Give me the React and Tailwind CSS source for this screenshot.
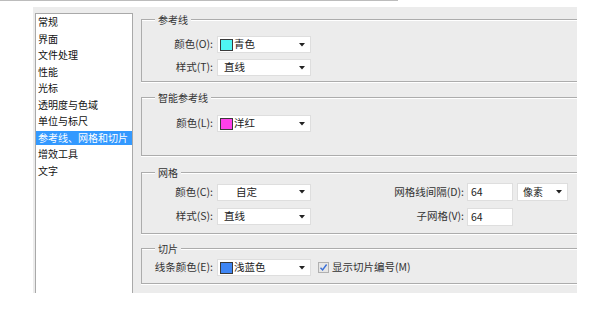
import React from "react";

const font = { fontFamily: '"Noto Sans CJK SC", "Noto Sans", sans-serif' };

function Arrow() {
  return (
    <svg width="6" height="4" viewBox="0 0 6 4" className="absolute right-[5px] top-1/2 -translate-y-1/2">
      <path d="M0 0 H6 L3 3.5 Z" fill="#222" />
    </svg>
  );
}

function Select({ swatch, text, w = "w-[94px]", indent = false }) {
  return (
    <div className={`relative ${w} h-[17px] bg-white border border-[#dedede] flex items-center pl-[2px]`}>
      {swatch && <div className="w-[13px] h-[12px] border border-[#3a3a3a]" style={{ background: swatch }} />}
      <span className={`${swatch ? "ml-[1px]" : indent ? "ml-[16px]" : "ml-[4px]"} text-[10.5px] leading-none text-[#222]`}>{text}</span>
      <Arrow />
    </div>
  );
}

function Label({ children, w = "w-[71px]" }) {
  return <div className={`${w} text-right text-[10.5px] leading-none text-[#333] mr-[4px] shrink-0`}>{children}</div>;
}

function Group({ title, className, children }) {
  return (
    <div className={`relative border border-r-0 border-[#acacac] shadow-[inset_0_1px_0_#fff,0_1px_0_#fff] ${className}`}>
      <div className="absolute left-[13px] top-[-7px] bg-[#ececec] px-[3px] text-[10px] leading-[13px] text-[#333]">{title}</div>
      {children}
    </div>
  );
}

export default function App() {
  const items = ["常规", "界面", "文件处理", "性能", "光标", "透明度与色域", "单位与标尺", "参考线、网格和切片", "增效工具", "文字"];
  return (
    <div className="w-[592px] h-[312px] bg-white overflow-hidden" style={font}>
      <div className="h-px w-[398px] bg-[#bcbcbc]" />
      <div className="ml-[33px] mt-[6px] w-[544px] h-[286px] bg-[#ececec] flex overflow-hidden">
        <div className="ml-[2px] mt-[6px] w-[98px] h-[281px] bg-white border border-b-0 border-[#a9a9a9] pt-[1px] shrink-0">
          {items.map((t, i) => (
            <div
              key={t}
              className={`h-[14px] mb-[2.5px] pl-[2px] text-[10px] leading-[14px] ${i === 7 ? "bg-[#3399ff] text-white" : "text-[#111]"}`}
            >
              {t}
            </div>
          ))}
        </div>
        <div className="ml-[8px] flex-1 flex flex-col">
          <Group title="参考线" className="mt-[12px] pt-[16px] pb-[5px]">
            <div className="flex items-center h-[17px]">
              <Label>颜色(O):</Label>
              <Select swatch="#4ff6f3" text="青色" />
            </div>
            <div className="flex items-center h-[17px] mt-[6px]">
              <Label>样式(T):</Label>
              <Select text="直线" />
            </div>
          </Group>
          <Group title="智能参考线" className="mt-[15px] pt-[17px] pb-[23px]">
            <div className="flex items-center h-[17px]">
              <Label>颜色(L):</Label>
              <Select swatch="#ff40ea" text="洋红" />
            </div>
          </Group>
          <Group title="网格" className="mt-[16px] pt-[10px] pb-[8px]">
            <div className="flex items-center h-[18px]">
              <Label>颜色(C):</Label>
              <Select text="自定" indent />
              <div className="w-[153px] text-right text-[10.5px] leading-none text-[#333] shrink-0">网格线间隔(D):</div>
              <div className="ml-[3px] w-[46px] h-[18px] bg-white border border-[#dedede] text-[10.5px] leading-[16px] pl-[3px] text-[#222]">64</div>
              <div className="ml-[4px]">
                <div className="relative w-[51px] h-[18px] bg-white border border-[#dedede] flex items-center pl-[5px]">
                  <span className="text-[10px] leading-none text-[#222]">像素</span>
                  <Arrow />
                </div>
              </div>
            </div>
            <div className="flex items-center h-[17px] mt-[7px]">
              <Label>样式(S):</Label>
              <Select text="直线" />
              <div className="w-[153px] text-right text-[10.5px] leading-none text-[#333] shrink-0">子网格(V):</div>
              <div className="ml-[3px] w-[46px] h-[18px] bg-white border border-[#dedede] text-[10.5px] leading-[16px] pl-[3px] text-[#222]">64</div>
            </div>
          </Group>
          <Group title="切片" className="mt-[14px] pt-[10px] pb-[7px]">
            <div className="flex items-center h-[17px]">
              <Label>线条颜色(E):</Label>
              <Select swatch="#3f86f4" text="浅蓝色" />
              <div className="ml-[7px] w-[11px] h-[11px] border border-[#b0b0b0] bg-[#e6e6e6] flex items-center justify-center">
                <svg width="9" height="9" viewBox="0 0 9 9">
                  <path d="M1.5 4.8 L3.6 7 L7.6 1.5" stroke="#3a6fd8" strokeWidth="1.4" fill="none" />
                </svg>
              </div>
              <span className="ml-[3px] text-[10.5px] leading-none text-[#333]">显示切片编号(M)</span>
            </div>
          </Group>
        </div>
      </div>
    </div>
  );
}
